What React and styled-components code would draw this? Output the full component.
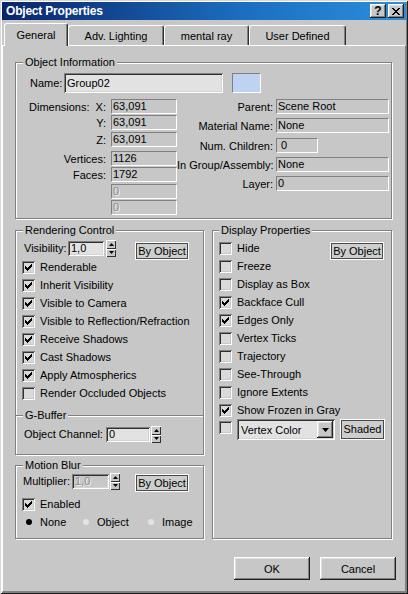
import React from 'react';
import styled, { createGlobalStyle } from 'styled-components';

const BG = '#c6c7c6';
const FONT = '"Liberation Sans", Arial, sans-serif';

const GlobalStyle = createGlobalStyle`
  html, body { margin: 0; padding: 0; background: ${BG}; }
  body { font-family: ${FONT}; font-size: 11px; color: #000; }
  *, *::before, *::after { box-sizing: border-box; }
`;

const RAISED = `inset -1px -1px 0 #202020, inset 1px 1px 0 #fff, inset -2px -2px 0 #808080, inset 2px 2px 0 #e0e0e0`;
const SUNKEN2 = `inset 1px 1px 0 #808080, inset -1px -1px 0 #fff, inset 2px 2px 0 #303030, inset -2px -2px 0 #d4d4d4`;

const Window = styled.div`
  width: 408px;
  height: 594px;
  padding: 2px;
  display: flex;
  flex-direction: column;
  background: ${BG};
  box-shadow: inset 1px 1px 0 #d8d8d8, inset -1px -1px 0 #202020, inset 2px 2px 0 #fff, inset -2px -2px 0 #808080;
`;

const TitleBar = styled.div`
  height: 18px;
  display: flex;
  align-items: center;
  padding: 0 2px 0 4px;
  background: linear-gradient(90deg, #0a246a 0%, #1c6fc0 60%, #2a8fdc 100%);
  color: #fff;
  font-weight: bold;
  font-size: 12px;
`;

const Title = styled.span`
  flex: 1;
  letter-spacing: -0.2px;
`;

const TitleButtons = styled.div`
  display: flex;
  gap: 2px;
`;

const TitleButton = styled.div`
  width: 16px;
  height: 14px;
  background: ${BG};
  box-shadow: ${RAISED};
  display: flex;
  align-items: center;
  justify-content: center;
  color: #000;
  font-size: 12px;
  font-weight: bold;
  line-height: 14px;
`;

const TabStrip = styled.div`
  display: flex;
  align-items: flex-end;
  height: 22px;
  margin-top: 3px;
  padding-left: 2px;
  position: relative;
  z-index: 1;
`;

const Tab = styled.div`
  width: ${p => p.$w}px;
  height: ${p => (p.$active ? 23 : 20)}px;
  margin-bottom: ${p => (p.$active ? -1 : 0)}px;
  background: ${BG};
  border-top: 1px solid #fff;
  border-left: 1px solid #fff;
  border-right: 1px solid #303030;
  box-shadow: inset -1px 0 0 #808080;
  border-radius: 3px 3px 0 0;
  display: flex;
  align-items: center;
  justify-content: center;
  white-space: nowrap;
`;

const Panel = styled.div`
  flex: 1;
  border-top: 1px solid #fff;
  border-left: 1px solid #fff;
  border-right: 1px solid #808080;
  border-bottom: 1px solid #808080;
  padding: 16px 13px 0 12px;
  display: flex;
  flex-direction: column;
`;

const Group = styled.div`
  position: relative;
  border: 1px solid #808080;
  box-shadow: inset 1px 1px 0 #fff, 1px 1px 0 #fff;
  height: ${p => p.$h}px;
  padding: ${p => p.$pad};
  display: flex;
  flex-direction: column;
`;

const Legend = styled.span`
  position: absolute;
  top: -7px;
  left: ${p => p.$left ?? 7}px;
  padding: 0 2px;
  background: ${BG};
  line-height: 13px;
  white-space: nowrap;
`;

const NameRow = styled.div`
  display: flex;
  align-items: center;
  height: 20px;
  padding-left: 1px;
`;

const NameLabel = styled.span`
  width: 34px;
`;

const Edit = styled.div`
  width: ${p => p.$w}px;
  height: ${p => p.$h || 15}px;
  flex: none;
  background: ${p => (p.$disabled ? BG : '#e2e2e2')};
  box-shadow: ${SUNKEN2};
  padding: 0 3px;
  line-height: ${p => p.$h || 15}px;
  color: ${p => (p.$disabled ? '#8a8a8a' : '#000')};
  text-shadow: ${p => (p.$disabled ? '1px 1px 0 #f4f4f4' : 'none')};
  white-space: nowrap;
  overflow: hidden;
`;

const Swatch = styled.div`
  width: 29px;
  height: 20px;
  margin-left: 9px;
  background: #bed3f1;
  border-top: 1px solid #808080;
  border-left: 1px solid #808080;
  border-right: 1px solid #fff;
  border-bottom: 1px solid #fff;
`;

const InfoCols = styled.div`
  display: flex;
  margin-top: 6px;
`;

const DimCol = styled.div`
  width: 148px;
  display: flex;
  flex-direction: column;
`;

const PropCol = styled.div`
  display: flex;
  flex-direction: column;
`;

const FRow = styled.div`
  display: flex;
  align-items: center;
  height: 15px;
  margin-top: ${p => p.$mt || 0}px;
`;

const DimLabel = styled.span`
  width: 78px;
  margin-right: 4px;
  display: flex;
  justify-content: ${p => (p.$split ? 'space-between' : 'flex-end')};
  padding-right: 1px;
  white-space: nowrap;
`;

const PropLabel = styled.span`
  width: 96px;
  margin-right: 3px;
  text-align: right;
  white-space: nowrap;
`;

const Field = styled.div`
  width: ${p => p.$w}px;
  height: 15px;
  flex: none;
  background: ${BG};
  border-top: 1px solid #808080;
  border-left: 1px solid #808080;
  border-bottom: 1px solid #fff;
  border-right: 1px solid #fff;
  padding-left: 1px;
  line-height: 13px;
  color: ${p => (p.$disabled ? '#8a8a8a' : '#000')};
  text-shadow: ${p => (p.$disabled ? '1px 1px 0 #f4f4f4' : 'none')};
  white-space: nowrap;
  overflow: hidden;
`;

const Lower = styled.div`
  display: grid;
  grid-template-columns: 189px 180px;
  column-gap: 8px;
  margin-top: 11px;
`;

const Stack = styled.div`
  display: flex;
  flex-direction: column;
  gap: 10px;
`;

const CtlRow = styled.div`
  display: flex;
  align-items: flex-start;
  height: 15px;
  padding-left: ${p => p.$pl || 0}px;
  margin-top: ${p => p.$mt || 0}px;
  line-height: 15px;
`;

const CtlLabel = styled.span`
  width: ${p => p.$w}px;
  white-space: nowrap;
`;

const Spinner = styled.div`
  width: 10px;
  height: 17px;
  margin-top: -1px;
  margin-left: ${p => p.$ml || 2}px;
  display: flex;
  flex-direction: column;
`;

const SpinHalf = styled.div`
  flex: 1;
  background: ${BG};
  box-shadow: inset 1px 1px 0 #fff, inset -1px -1px 0 #303030;
  display: flex;
  align-items: center;
  justify-content: center;
`;

const ToggleButton = styled.div`
  width: ${p => p.$w}px;
  height: ${p => p.$h || 18}px;
  margin-left: ${p => p.$ml || 0}px;
  margin-top: ${p => p.$mt || 0}px;
  flex: none;
  background: #cdcecd;
  border: 1px solid #fff;
  box-shadow: inset 0 0 0 1px #4a4a4a;
  display: flex;
  align-items: center;
  justify-content: center;
  line-height: 1;
  white-space: nowrap;
`;

const CheckList = styled.div`
  display: flex;
  flex-direction: column;
  margin-top: ${p => p.$mt || 0}px;
`;

const CheckRow = styled.div`
  display: flex;
  align-items: flex-start;
  height: 18px;
  line-height: 18px;
  gap: 5px;
  white-space: nowrap;
`;

const Box = styled.span`
  width: 13px;
  height: 13px;
  flex: none;
  margin-top: ${p => p.$mt ?? 3}px;
  background: #dadada;
  box-shadow: inset 1px 1px 0 #808080, inset -1px -1px 0 #fff, inset 2px 2px 0 #303030, inset -2px -2px 0 #c6c7c6;
  display: flex;
  align-items: center;
  justify-content: center;
`;

const Divider = styled.div`
  position: relative;
  height: 2px;
  margin: 13px 0 0 -6px;
  border-top: 1px solid #808080;
  border-bottom: 1px solid #fff;
`;

const RadioRow = styled.div`
  display: grid;
  grid-template-columns: 57px 65px auto;
  height: 18px;
  line-height: 18px;
  padding-left: 4px;
`;

const RadioItem = styled.div`
  display: flex;
  align-items: flex-start;
  gap: 8px;
`;

const Dot = styled.span`
  width: 6px;
  height: 6px;
  margin-top: 6px;
  border-radius: 50%;
  background: ${p => (p.$on ? '#000' : '#e4e4e4')};
  flex: none;
`;

const Spacer = styled.span`
  flex: 1;
`;

const Select = styled.div`
  width: 98px;
  height: 21px;
  flex: none;
  background: #e2e2e2;
  box-shadow: ${SUNKEN2};
  padding: 2px;
  display: flex;
  align-items: center;
`;

const SelectText = styled.span`
  flex: 1;
  padding-left: 2px;
  white-space: nowrap;
`;

const SelectButton = styled.div`
  width: 16px;
  height: 17px;
  background: ${BG};
  box-shadow: ${RAISED};
  display: flex;
  align-items: center;
  justify-content: center;
`;

const Footer = styled.div`
  display: flex;
  justify-content: flex-end;
  gap: 10px;
  margin: 18px -4px 0 0;
`;

const PushButton = styled.div`
  width: 76px;
  height: 23px;
  background: ${BG};
  box-shadow: ${RAISED};
  display: flex;
  align-items: center;
  justify-content: center;
`;

const CHECK = 'M6 0h1v1H6z M5 1h2v1H5z M0 2h1v1H0z M4 2h3v1H4z M0 3h2v1H0z M3 3h3v1H3z M0 4h5v1H0z M1 5h3v1H1z M2 6h1v1H2z';
const XMARK = 'M0 0h2v1H0z M6 0h2v1H6z M1 1h2v1H1z M5 1h2v1H5z M2 2h4v1H2z M3 3h2v1H3z M2 4h4v1H2z M1 5h2v1H1z M5 5h2v1H5z M0 6h2v1H0z M6 6h2v1H6z';

const CheckMark = () => (
  <svg width="7" height="7" viewBox="0 0 7 7" shapeRendering="crispEdges">
    <path d={CHECK} fill="#000" />
  </svg>
);

const Check = ({ on, mt }) => <Box $mt={mt}>{on && <CheckMark />}</Box>;

const Tri = ({ down }) => (
  <svg width="5" height="3" viewBox="0 0 5 3">
    <path d={down ? 'M0 0h5L2.5 3z' : 'M2.5 0L5 3H0z'} fill="#000" />
  </svg>
);

const Spin = ({ ml }) => (
  <Spinner $ml={ml}>
    <SpinHalf><Tri /></SpinHalf>
    <SpinHalf><Tri down /></SpinHalf>
  </Spinner>
);

const CheckItem = ({ on, children }) => (
  <CheckRow>
    <Check on={on} />
    <span>{children}</span>
  </CheckRow>
);

const renderItems = [
  ['Renderable', true],
  ['Inherit Visibility', true],
  ['Visible to Camera', true],
  ['Visible to Reflection/Refraction', true],
  ['Receive Shadows', true],
  ['Cast Shadows', true],
  ['Apply Atmospherics', true],
  ['Render Occluded Objects', false],
];

const displayItems = [
  ['Freeze', false],
  ['Display as Box', false],
  ['Backface Cull', true],
  ['Edges Only', true],
  ['Vertex Ticks', false],
  ['Trajectory', false],
  ['See-Through', false],
  ['Ignore Extents', false],
  ['Show Frozen in Gray', true],
];

export default function App() {
  return (
    <>
      <GlobalStyle />
      <Window>
        <TitleBar>
          <Title>Object Properties</Title>
          <TitleButtons>
            <TitleButton>?</TitleButton>
            <TitleButton>
              <svg width="8" height="7" viewBox="0 0 8 7" shapeRendering="crispEdges">
                <path d={XMARK} fill="#000" />
              </svg>
            </TitleButton>
          </TitleButtons>
        </TitleBar>

        <TabStrip>
          <Tab $w={64} $active>General</Tab>
          <Tab $w={96}>Adv. Lighting</Tab>
          <Tab $w={85}>mental ray</Tab>
          <Tab $w={97}>User Defined</Tab>
        </TabStrip>

        <Panel>
          <Group $h={157} $pad="10px 2px 0 13px">
            <Legend>Object Information</Legend>
            <NameRow>
              <NameLabel>Name:</NameLabel>
              <Edit $w={159} $h={20}>Group02</Edit>
              <Swatch />
            </NameRow>
            <InfoCols>
              <DimCol>
                <FRow>
                  <DimLabel $split><span>Dimensions:</span><span>X:</span></DimLabel>
                  <Field $w={66}>63,091</Field>
                </FRow>
                <FRow $mt={1}>
                  <DimLabel>Y:</DimLabel>
                  <Field $w={66}>63,091</Field>
                </FRow>
                <FRow $mt={2}>
                  <DimLabel>Z:</DimLabel>
                  <Field $w={66}>63,091</Field>
                </FRow>
                <FRow $mt={4}>
                  <DimLabel>Vertices:</DimLabel>
                  <Field $w={66}>1126</Field>
                </FRow>
                <FRow $mt={1}>
                  <DimLabel>Faces:</DimLabel>
                  <Field $w={66}>1792</Field>
                </FRow>
                <FRow $mt={2}>
                  <DimLabel />
                  <Field $w={66} $disabled>0</Field>
                </FRow>
                <FRow $mt={1}>
                  <DimLabel />
                  <Field $w={66} $disabled>0</Field>
                </FRow>
              </DimCol>
              <PropCol>
                <FRow>
                  <PropLabel>Parent:</PropLabel>
                  <Field $w={113}>Scene Root</Field>
                </FRow>
                <FRow $mt={4}>
                  <PropLabel>Material Name:</PropLabel>
                  <Field $w={113}>None</Field>
                </FRow>
                <FRow $mt={5}>
                  <PropLabel>Num. Children:</PropLabel>
                  <Field $w={42}>&nbsp;0</Field>
                </FRow>
                <FRow $mt={4}>
                  <PropLabel>In Group/Assembly:</PropLabel>
                  <Field $w={113}>None</Field>
                </FRow>
                <FRow $mt={4}>
                  <PropLabel>Layer:</PropLabel>
                  <Field $w={113}>0</Field>
                </FRow>
              </PropCol>
            </InfoCols>
          </Group>

          <Lower>
            <Stack>
              <Group $h={225} $pad="10px 0 0 6px">
                <Legend>Rendering Control</Legend>
                <CtlRow $pl={2}>
                  <CtlLabel $w={44}>Visibility:</CtlLabel>
                  <Edit $w={36}>1,0</Edit>
                  <Spin ml={2} />
                  <ToggleButton $w={54} $ml={19} $mt={1}>By Object</ToggleButton>
                </CtlRow>
                <CheckList $mt={2}>
                  {renderItems.map(([t, on]) => (
                    <CheckItem key={t} on={on}>{t}</CheckItem>
                  ))}
                </CheckList>
                <Divider>
                  <Legend>G-Buffer</Legend>
                </Divider>
                <CtlRow $pl={2} $mt={10}>
                  <CtlLabel $w={82}>Object Channel:</CtlLabel>
                  <Edit $w={44}>0</Edit>
                  <Spin ml={1} />
                </CtlRow>
              </Group>

              <Group $h={74} $pad="8px 0 0 6px">
                <Legend>Motion Blur</Legend>
                <CtlRow $pl={1}>
                  <CtlLabel $w={49}>Multiplier:</CtlLabel>
                  <Edit $w={37} $disabled>1,0</Edit>
                  <Spin ml={1} />
                  <ToggleButton $w={54} $ml={15}>By Object</ToggleButton>
                </CtlRow>
                <CheckList $mt={6}>
                  <CheckItem on>Enabled</CheckItem>
                </CheckList>
                <RadioRow>
                  <RadioItem><Dot $on /><span>None</span></RadioItem>
                  <RadioItem><Dot /><span>Object</span></RadioItem>
                  <RadioItem><Dot /><span>Image</span></RadioItem>
                </RadioRow>
              </Group>
            </Stack>

            <Group $h={309} $pad="8px 7px 0 6px">
              <Legend $left={6}>Display Properties</Legend>
              <CheckList>
                <CheckRow>
                  <Check />
                  <span>Hide</span>
                  <Spacer />
                  <ToggleButton $w={54} $mt={3}>By Object</ToggleButton>
                </CheckRow>
                {displayItems.map(([t, on]) => (
                  <CheckItem key={t} on={on}>{t}</CheckItem>
                ))}
                <CheckRow>
                  <Check mt={2} />
                  <Select>
                    <SelectText>Vertex Color</SelectText>
                    <SelectButton>
                      <svg width="7" height="4" viewBox="0 0 7 4"><path d="M0 0h7L3.5 4z" fill="#000" /></svg>
                    </SelectButton>
                  </Select>
                  <ToggleButton $w={45} $h={21}>Shaded</ToggleButton>
                </CheckRow>
              </CheckList>
            </Group>
          </Lower>

          <Footer>
            <PushButton>OK</PushButton>
            <PushButton>Cancel</PushButton>
          </Footer>
        </Panel>
      </Window>
    </>
  );
}
